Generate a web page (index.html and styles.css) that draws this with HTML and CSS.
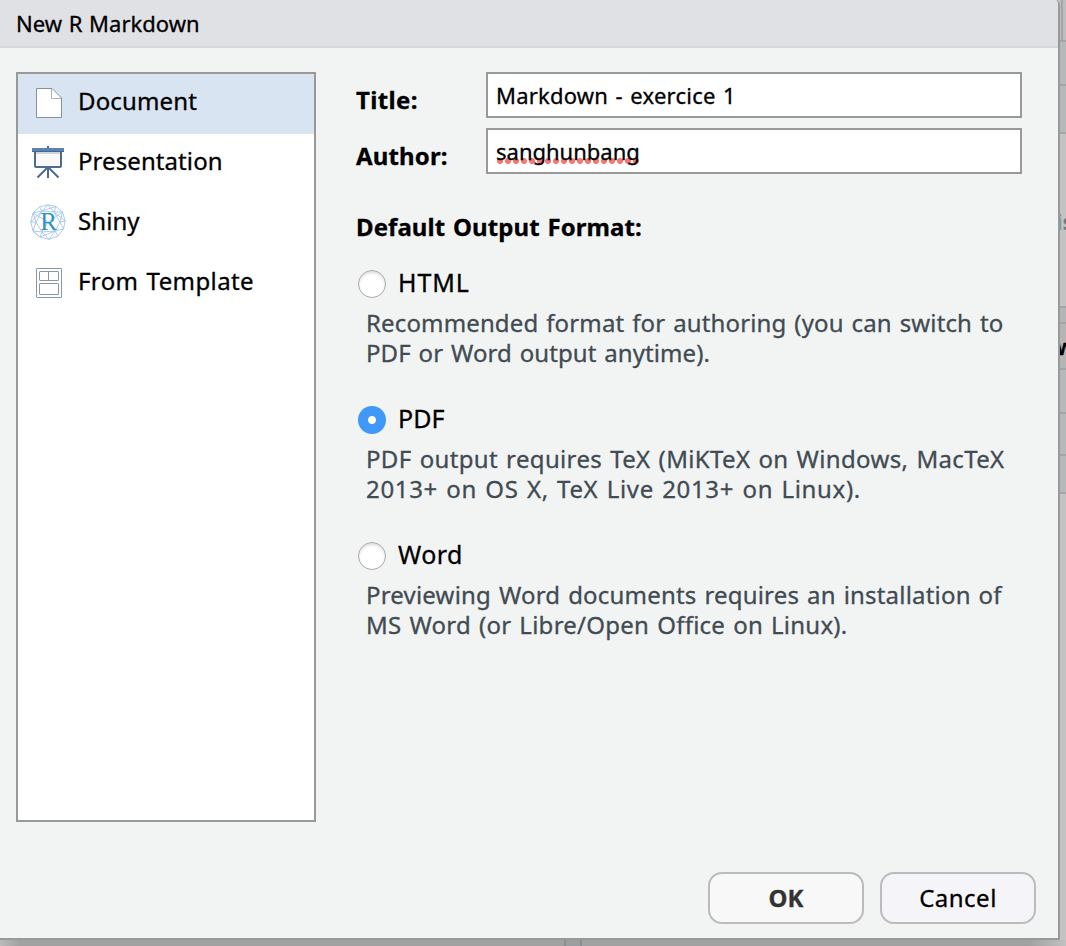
FILE: index.html
```html
<!DOCTYPE html>
<html lang="en">
<head>
<meta charset="utf-8">
<title>New R Markdown</title>
<link rel="stylesheet" href="styles.css">
</head>
<body>
<div class="screen">
  <main class="dialog">
    <header class="caption"><span class="t-caption">New R Markdown</span></header>
    <div class="content">
      <nav class="types">
        <div class="type selected">
          <svg class="icon" width="36" height="36" viewBox="0 0 36 36"><path d="M6.500 3.500H22L31.500 13V32.500H6.500Z" fill="#fff" stroke="#8392a2"/><path d="M21.500 4V13.500H31" fill="#fff" stroke="#a9b4bf"/></svg>
          <span class="t-doc">Document</span>
        </div>
        <div class="type">
          <svg class="icon" width="36" height="36" viewBox="0 0 36 36"><path d="M18 1V5M18 22V33M17 23L7.500 32.500M19 23L28.500 32.500" fill="none" stroke="#4b6b90" stroke-width="2"/><rect x="5" y="6" width="26" height="16" rx="1" fill="#f8f8f8" stroke="#4b6b90" stroke-width="2"/><path d="M6 8H30" stroke="#d0d3d7" stroke-width="2"/><rect x="2" y="3" width="32" height="4" fill="#5c82b3"/><path d="M2 6.500H34" stroke="#48698f"/></svg>
          <span class="t-pres">Presentation</span>
        </div>
        <div class="type">
          <svg class="icon raised" width="36" height="36" viewBox="0 0 36 36"><g fill="none" stroke="#a4c6e4" stroke-width=".9"><path d="M18 .8L26 2.500L32.500 8L35.200 17L33.500 25L28 32L19 35.300L10 33L3 27L.8 18L3 9L9.500 3Z"/><path d="M18 .8L12 7L3 9L6 18L.8 18M9.500 3L12 7L26 2.500L24 8L32.500 8L30 18L35.200 17M3 27L6 18L12 7L24 8L30 18L25 27L12 28L6 18M3 27L12 28L10 33M12 28L19 35.300L25 27L28 32M25 27L33.500 25L30 18M18 .8L24 8M3 9L18 18L32.500 8M12 28L18 18L25 27M.8 18L12 7M24 8L35.200 17M3 27L10 33L25 27"/></g><text class="shiny-r" x="18.500" y="26" text-anchor="middle">R</text></svg>
          <span class="t-shiny">Shiny</span>
        </div>
        <div class="type">
          <svg class="icon" width="36" height="36" viewBox="0 0 36 36" fill="none" stroke="#8b97a5"><rect x="6.500" y="3.500" width="25" height="29" rx=".5"/><rect x="9.500" y="6.500" width="19" height="9" rx=".5"/><path d="M18.500 6.500V15.500"/><rect x="9.500" y="18.500" width="19" height="11" rx=".5"/></svg>
          <span class="t-tmpl">From Template</span>
        </div>
      </nav>
      <section class="form">
        <div class="row"><label class="label t-title">Title:</label><div class="field"><span class="t-value">Markdown - exercice 1</span></div></div>
        <div class="row"><label class="label t-author">Author:</label><div class="field"><span class="misspelt">sanghunbang</span></div></div>
        <h2 class="heading"><span class="t-heading">Default Output Format:</span></h2>
        <div class="option">
          <div class="choice"><i class="radio"></i><span class="t-html">HTML</span></div>
          <p class="hint"><span class="t-h1">Recommended format for authoring (you can switch to</span><br><span class="t-h2">PDF or Word output anytime).</span></p>
        </div>
        <div class="option">
          <div class="choice"><i class="radio checked"></i><span>PDF</span></div>
          <p class="hint"><span class="t-h3">PDF output requires TeX (MiKTeX on Windows, MacTeX</span><br><span class="t-h4">2013+ on OS X, TeX Live 2013+ on Linux).</span></p>
        </div>
        <div class="option">
          <div class="choice"><i class="radio"></i><span class="t-word">Word</span></div>
          <p class="hint"><span class="t-h5">Previewing Word documents requires an installation of</span><br><span class="t-h6">MS Word (or Libre/Open Office on Linux).</span></p>
        </div>
      </section>
    </div>
    <footer class="actions">
      <div class="button ok"><span>OK</span></div>
      <div class="button"><span class="t-cancel">Cancel</span></div>
    </footer>
  </main>
  <aside class="behind">
    <div class="pane h40 tab"></div>
    <div class="pane h42 tint"></div>
    <div class="pane h46 tint"></div>
    <div class="pane h172"><span class="link">i<b>s</b></span></div>
    <div class="pane h14 cool"></div>
    <div class="pane h44 mid"><b class="frag">w</b></div>
    <div class="pane h42 tint"></div>
    <div class="pane h40 tint"></div>
    <div class="pane h36 tint"></div>
    <div class="pane rest"></div>
  </aside>
  <div class="below"><div class="splitter"></div></div>
</div>
</body>
</html>
```
FILE: styles.css
```css
* { box-sizing: border-box; }
body { margin: 0; overflow: hidden; font-family: "Noto Sans", sans-serif; font-size: 24px; color: #000; -webkit-text-stroke: .3px; }
.screen { width: 1066px; height: 946px; display: grid; grid-template-columns: 1060px 6px; grid-template-rows: 940px 6px; background: #c3c3c3; overflow: hidden; }
.dialog { background: #f2f4f4; border-right: 2px solid #999; border-bottom: 2px solid #999; border-top-right-radius: 5px; display: flex; flex-direction: column; overflow: hidden; }
.caption { height: 48px; flex: none; background: #e0e1e5; border-bottom: 2px solid #d6d7dc; padding-left: 16px; font-size: 22px; line-height: 46px; white-space: nowrap; }
.content { display: flex; padding: 24px 0 0 16px; flex: 1; }
.types { width: 300px; height: 750px; flex: none; border: 2px solid #999; background: #fff; }
.type { height: 60px; display: flex; align-items: center; padding-left: 12px; gap: 12px; line-height: 54px; white-space: nowrap; }
.type span { height: 60px; }
.icon { flex: none; margin-bottom: 2px; }
.raised { margin-bottom: 4px; }
.selected { background: #d8e4f1; }
.shiny-r { font-family: "Liberation Serif", serif; font-size: 25px; fill: #2f91c4; -webkit-text-stroke: 0; }
.form { width: 666px; margin-left: 40px; }
.row { display: flex; height: 46px; margin-bottom: 10px; white-space: nowrap; }
.label { width: 130px; font-weight: 700; line-height: 56px; }
.field { width: 536px; height: 46px; border: 2px solid #999; background: #fff; padding-left: 8px; font-size: 22px; line-height: 42px; }
.misspelt { display: inline-block; height: 34px; background: radial-gradient(circle, #f87673 2.700px, transparent 3.300px) 0 28px / 8px 6px repeat-x; }
.heading { margin: 35px 0 0; height: 54px; font-size: 24px; line-height: 36px; white-space: nowrap; }
.option { height: 136px; white-space: nowrap; }
.choice { display: flex; gap: 12px; padding-left: 2px; height: 45px; line-height: 38px; font-size: 25px; }
.radio { width: 28px; height: 28px; margin-top: 7px; border-radius: 50%; background: #fff; border: 1px solid #aaa; box-shadow: inset 0 2px 3px #ddd; }
.checked { border: 0; background: radial-gradient(circle, #fff 3.500px, #4099f8 4.500px); box-shadow: none; }
.hint { margin: 0 0 0 10px; line-height: 30px; color: #414b52; }
.actions { display: flex; gap: 16px; justify-content: flex-end; padding-right: 22px; height: 66px; }
.button { width: 156px; height: 52px; border: 2px solid #bbb; border-radius: 14px; background: #f5f5f9; text-align: center; line-height: 48px; }
.ok { background: #f8f8f8; font-weight: 700; color: #333; }

.t-caption { word-spacing: 1px; }
.t-doc { letter-spacing: .15px; }
.t-pres, .t-shiny { letter-spacing: .08px; }
.t-tmpl { letter-spacing: .4px; word-spacing: 1.500px; }
.t-title { letter-spacing: .35px; }
.t-author { letter-spacing: .15px; }
.t-value { letter-spacing: .22px; word-spacing: 1.500px; }
.t-heading { letter-spacing: .07px; word-spacing: 1.500px; }
.t-html { letter-spacing: .9px; }
.t-word { letter-spacing: .4px; }
.t-h1 { letter-spacing: .14px; word-spacing: 1.500px; }
.t-h2 { letter-spacing: .08px; word-spacing: 1.500px; }
.t-h3 { letter-spacing: .35px; word-spacing: 1.500px; }
.t-h4 { letter-spacing: .65px; word-spacing: 1.500px; }
.t-h5 { letter-spacing: .19px; word-spacing: 1.500px; }
.t-h6 { letter-spacing: .25px; word-spacing: 1.500px; }
.t-cancel { letter-spacing: .5px; }

.behind { overflow: hidden; display: flex; flex-direction: column; }
.pane { box-sizing: content-box; flex: none; width: 6px; border-bottom: 2px solid #a2a6a6; overflow: hidden; background: #c3c3c3; white-space: nowrap; }
.h40 { height: 40px; } .h42 { height: 42px; } .h46 { height: 46px; } .h172 { height: 172px; }
.h14 { height: 14px; } .h44 { height: 44px; } .h36 { height: 36px; }
.tab { background: linear-gradient(90deg, #bbb 1px, #a5a5a8 1px, #a5a5a8 3px, #bebec0 3px); }
.tint { background: #b4b9b9; }
.cool { background: #b4b5b9; }
.mid { background: #b5b5b5; }
.rest { height: 452px; border: 0; }
.link { display: block; margin: 70px 0 0 -3px; color: #7298b2; font-size: 22px; line-height: 34px; }
.link b { color: #777; }
.frag { display: block; margin-left: -4px; line-height: 44px; font-size: 22px; }
.below { grid-column: 1 / 3; padding-left: 564px; background: linear-gradient(90deg, #bababa, #a1a1a1 20px, #a1a1a1 1030px, #c1c1c1 1066px); }
.splitter { width: 18px; height: 6px; border: solid #8b8f90; border-width: 0 2px; background: #9b9ea0; }
```
